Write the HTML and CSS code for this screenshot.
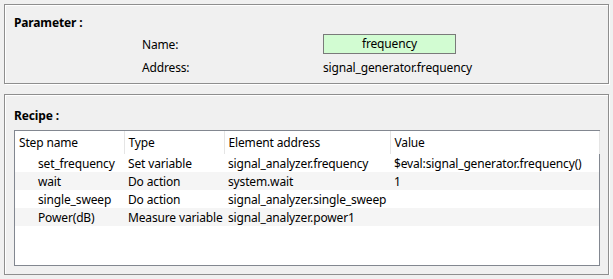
FILE: index.html
```html
<!DOCTYPE html>
<html lang="en">
<head>
    <meta charset="UTF-8">
    <meta name="viewport" content="width=device-width, initial-scale=1.0">
    <title>Recipe editor</title>
    <link rel="stylesheet" href="styles.css">
</head>
<body>
    <div class="group param-group">
        <div class="group-title">Parameter :</div>
        <div class="param-grid">
            <div class="param-label">Name:</div>
            <div class="param-value"><div class="name-box">frequency</div></div>
            <div class="param-label">Address:</div>
            <div class="param-value">signal_generator.frequency</div>
        </div>
    </div>

    <div class="group recipe-group">
        <div class="group-title">Recipe :</div>
        <div class="list-frame">
            <table class="steps">
                <colgroup>
                    <col class="col-name">
                    <col class="col-type">
                    <col class="col-address">
                    <col class="col-value">
                </colgroup>
                <thead>
                    <tr>
                        <th>Step name</th>
                        <th>Type</th>
                        <th>Element address</th>
                        <th>Value</th>
                    </tr>
                </thead>
                <tbody>
                    <tr>
                        <td class="step-name">set_frequency</td>
                        <td>Set variable</td>
                        <td>signal_analyzer.frequency</td>
                        <td>$eval:signal_generator.frequency()</td>
                    </tr>
                    <tr>
                        <td class="step-name">wait</td>
                        <td>Do action</td>
                        <td>system.wait</td>
                        <td>1</td>
                    </tr>
                    <tr>
                        <td class="step-name">single_sweep</td>
                        <td>Do action</td>
                        <td>signal_analyzer.single_sweep</td>
                        <td></td>
                    </tr>
                    <tr>
                        <td class="step-name">Power(dB)</td>
                        <td>Measure variable</td>
                        <td>signal_analyzer.power1</td>
                        <td></td>
                    </tr>
                </tbody>
            </table>
        </div>
    </div>
</body>
</html>
```

FILE: styles.css
```css
body {
    background-color: #f0f0f0;
    color: #000000;
    font-family: "Noto Sans", "Open Sans", sans-serif;
    font-size: 12px;
    line-height: 17px;
    letter-spacing: -0.15px;
    margin: 0;
    padding: 4px 4px 0 4px;
}

.group {
    border: 1px solid #8e8e8e;
    box-shadow: inset 1px 1px 0 #ffffff, 1px 1px 0 #ffffff;
    padding: 0 8px 0 9px;
}

.param-group {
    height: 80px;
    box-sizing: border-box;
    padding-top: 9px;
}

.recipe-group {
    margin-top: 10px;
    height: 181px;
    box-sizing: border-box;
    padding-top: 12px;
}

.group-title {
    font-weight: bold;
    height: 17px;
}

.param-grid {
    display: grid;
    grid-template-columns: 181px 1fr;
    grid-auto-rows: 20px;
    row-gap: 3px;
    margin: 3px 0 0 128px;
}

.param-label,
.param-value {
    display: flex;
    align-items: center;
    padding-top: 1px;
}

.name-box {
    width: 133px;
    height: 20px;
    box-sizing: border-box;
    margin-top: -1px;
    border: 1px solid #7a7a7a;
    background-color: #d2fcd2;
    text-align: center;
    line-height: 18px;
}

.list-frame {
    margin-top: 6px;
    height: 136px;
    box-sizing: border-box;
    border: 1px solid #828790;
    background-color: #ffffff;
}

.steps {
    width: 584px;
    border-collapse: collapse;
    table-layout: fixed;
}

.col-name { width: 109px; }
.col-type { width: 100px; }
.col-address { width: 166px; }
.col-value { width: 209px; }

.steps th {
    font-weight: normal;
    text-align: left;
    height: 23px;
    padding: 0 0 0 4px;
    border-right: 1px solid #e5e5e5;
    white-space: nowrap;
    overflow: hidden;
}

.steps th + th {
    padding-left: 4px;
}

.steps td {
    height: 17px;
    padding: 1px 0 0 3px;
    box-sizing: border-box;
    white-space: nowrap;
    overflow: hidden;
}

.steps td + td {
    padding-left: 4px;
}

.steps td.step-name {
    padding-left: 23px;
}

.steps tbody tr:nth-child(even) {
    background-color: #f5f5f5;
}
```
